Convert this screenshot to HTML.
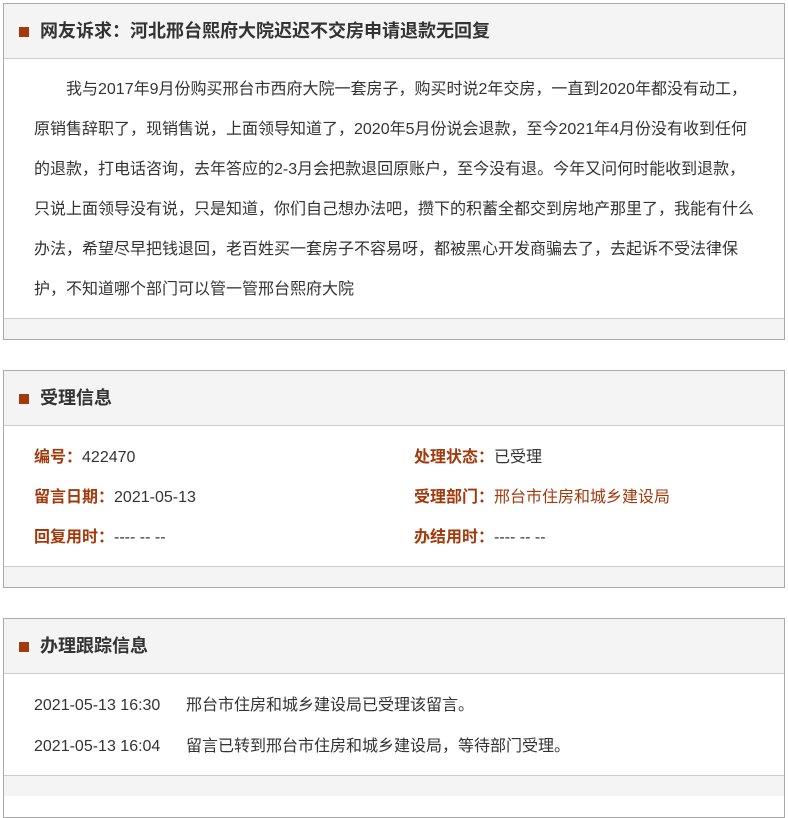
<!DOCTYPE html>
<html><head><meta charset="utf-8"><style>
*{margin:0;padding:0;box-sizing:border-box}
body{width:788px;height:781px;overflow:hidden;background:#fff;font-family:"Liberation Sans","Noto Sans CJK SC",sans-serif;font-size:16px;color:#333}
.box{position:absolute;left:3px;width:782px;border:1px solid #aaa;background:#fff}
.hd{height:55px;background:#f4f4f4;border-bottom:1px solid #ccc;position:relative}
.hd i{position:absolute;left:15px;top:23px;width:10px;height:10px;background:#a33a0c}
.hd b{position:absolute;left:36px;top:16px;font-size:18px;color:#333;line-height:22px}
.ft{height:21px;background:#f4f4f4;border-top:1px solid #ccc}
.l{position:absolute;white-space:nowrap;line-height:20px}
.lab{color:#a33a0c;font-weight:bold}
.red{color:#a33a0c}
</style></head><body>
<div class="box" style="top:3px;height:337px">
 <div class="hd"><i></i><b>网友诉求：河北邢台熙府大院迟迟不交房申请退款无回复</b></div>
 <div style="position:relative;height:259px">
  <div class="l" style="left:62px;top:21px">我与2017年9月份购买邢台市西府大院一套房子，购买时说2年交房，一直到2020年都没有动工，</div>
  <div class="l" style="left:30px;top:61px">原销售辞职了，现销售说，上面领导知道了，2020年5月份说会退款，至今2021年4月份没有收到任何</div>
  <div class="l" style="left:30px;top:101px">的退款，打电话咨询，去年答应的2-3月会把款退回原账户，至今没有退。今年又问何时能收到退款，</div>
  <div class="l" style="left:30px;top:141px">只说上面领导没有说，只是知道，你们自己想办法吧，攒下的积蓄全都交到房地产那里了，我能有什么</div>
  <div class="l" style="left:30px;top:181px">办法，希望尽早把钱退回，老百姓买一套房子不容易呀，都被黑心开发商骗去了，去起诉不受法律保</div>
  <div class="l" style="left:30px;top:221px">护，不知道哪个部门可以管一管邢台熙府大院</div>
 </div>
 <div class="ft"></div>
</div>
<div class="box" style="top:370px;height:218px">
 <div class="hd"><i></i><b>受理信息</b></div>
 <div style="position:relative;height:140px">
  <div class="l" style="left:30px;top:22px"><span class="lab">编号：</span>422470</div>
  <div class="l" style="left:410px;top:22px"><span class="lab">处理状态：</span>已受理</div>
  <div class="l" style="left:30px;top:62px"><span class="lab">留言日期：</span>2021-05-13</div>
  <div class="l" style="left:410px;top:62px"><span class="lab">受理部门：</span><span class="red">邢台市住房和城乡建设局</span></div>
  <div class="l" style="left:30px;top:102px"><span class="lab">回复用时：</span>---- -- --</div>
  <div class="l" style="left:410px;top:102px"><span class="lab">办结用时：</span>---- -- --</div>
 </div>
 <div class="ft"></div>
</div>
<div class="box" style="top:618px;height:200px">
 <div class="hd"><i></i><b>办理跟踪信息</b></div>
 <div style="position:relative;height:101px">
  <div class="l" style="left:30px;top:22px">2021-05-13 16:30</div>
  <div class="l" style="left:182px;top:22px">邢台市住房和城乡建设局已受理该留言。</div>
  <div class="l" style="left:30px;top:63px">2021-05-13 16:04</div>
  <div class="l" style="left:182px;top:63px">留言已转到邢台市住房和城乡建设局，等待部门受理。</div>
 </div>
 <div class="ft"></div>
</div>
</body></html>
